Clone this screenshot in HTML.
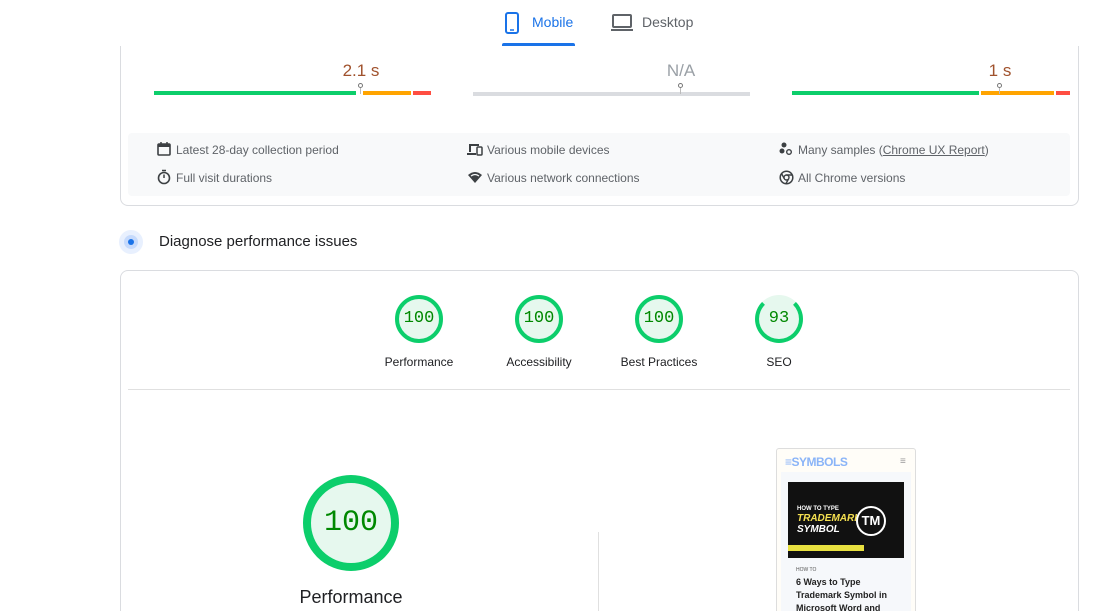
<!DOCTYPE html>
<html><head><style>
*{box-sizing:border-box;margin:0;padding:0}
html,body{width:1097px;height:611px;overflow:hidden}
body{background:#fff;font-family:"Liberation Sans",Arial,sans-serif;position:relative;color:#3c4043}
.abs{position:absolute}
.card{position:absolute;border:1px solid #dadce0;border-radius:8px;background:#fff}
.bar{position:absolute;height:4px}
.val{position:absolute;font-size:17px;color:#a0522d;transform:translateX(-50%)}
.pin{position:absolute;width:5px;height:5px;border:1px solid #777;border-radius:50%;background:#fff}
.pinl{position:absolute;width:1px;height:6px;background:#bbb}
.info{position:absolute;font-size:12px;color:#5f6368}
.ic{position:absolute}
.gauge{position:absolute;text-align:center;font-size:12px;color:#202124}
.gauge .c{width:48px;height:48px;border-radius:50%;border:4px solid #0cce6b;background:#e6f8ee;color:#008800;font-family:"Liberation Mono",monospace;font-size:17px;line-height:40px;margin:0 auto}
</style></head><body>
<div class="card" style="left:120px;top:-20px;width:959px;height:226px"></div>
<div class="abs" style="left:0;top:0;width:1097px;height:46px;background:#fff"></div>
<svg class="abs" style="left:504px;top:12px" width="16" height="22" viewBox="0 0 16 22"><rect x="2" y="1" width="12" height="20" rx="2" fill="none" stroke="#1a73e8" stroke-width="2"/><line x1="6" y1="18" x2="10" y2="18" stroke="#1a73e8" stroke-width="1.5"/></svg>
<div class="abs" style="left:532px;top:14px;font-size:14px;color:#1a73e8">Mobile</div>
<div class="abs" style="left:502px;top:43px;width:73px;height:3px;background:#1a73e8;border-radius:2px 2px 0 0"></div>
<svg class="abs" style="left:611px;top:13px" width="22" height="20" viewBox="0 0 22 20"><rect x="2" y="2" width="18" height="12" rx="1" fill="none" stroke="#5f6368" stroke-width="2"/><rect x="0" y="16" width="22" height="2" fill="#5f6368"/></svg>
<div class="abs" style="left:642px;top:14px;font-size:14px;color:#5f6368">Desktop</div>
<div class="val" style="left:361px;top:61px">2.1 s</div>
<div class="bar" style="left:154px;top:91px;width:202px;background:#0cce6b"></div>
<div class="bar" style="left:363px;top:91px;width:48px;background:#ffa400"></div>
<div class="bar" style="left:413px;top:91px;width:18px;background:#ff4e42"></div>
<div class="pin" style="left:358px;top:83px"></div><div class="pinl" style="left:360px;top:88px"></div>
<div class="val" style="left:681px;top:61px;color:#9aa0a6">N/A</div>
<div class="bar" style="left:473px;top:92px;width:277px;background:#dadce0"></div>
<div class="pin" style="left:678px;top:83px"></div><div class="pinl" style="left:680px;top:88px"></div>
<div class="val" style="left:1000px;top:61px">1 s</div>
<div class="bar" style="left:792px;top:91px;width:187px;background:#0cce6b"></div>
<div class="bar" style="left:981px;top:91px;width:73px;background:#ffa400"></div>
<div class="bar" style="left:1056px;top:91px;width:14px;background:#ff4e42"></div>
<div class="pin" style="left:997px;top:83px"></div><div class="pinl" style="left:999px;top:88px"></div>
<div class="abs" style="left:128px;top:133px;width:942px;height:63px;background:#f8f9fa;border-radius:4px"></div>
<svg class="ic" style="left:157px;top:142px" width="14" height="14" viewBox="0 0 14 14"><rect x="1" y="2" width="12" height="11" rx="1" fill="none" stroke="#3c4043" stroke-width="1.6"/><rect x="1" y="2" width="12" height="3" fill="#3c4043"/><line x1="4" y1="0" x2="4" y2="3" stroke="#3c4043" stroke-width="1.5"/><line x1="10" y1="0" x2="10" y2="3" stroke="#3c4043" stroke-width="1.5"/></svg>
<div class="info" style="left:176px;top:143px">Latest 28-day collection period</div>
<svg class="ic" style="left:157px;top:169px" width="14" height="16" viewBox="0 0 14 16"><circle cx="7" cy="9" r="5.5" fill="none" stroke="#3c4043" stroke-width="1.6"/><line x1="5" y1="1.5" x2="9" y2="1.5" stroke="#3c4043" stroke-width="1.5"/><line x1="7" y1="9" x2="7" y2="5.5" stroke="#3c4043" stroke-width="1.5"/></svg>
<div class="info" style="left:176px;top:171px">Full visit durations</div>
<svg class="ic" style="left:467px;top:143px" width="16" height="13" viewBox="0 0 16 13"><path d="M2 1h10v2H4v6H2z M0 10h9v2H0z" fill="#3c4043"/><rect x="10" y="4" width="5" height="8" rx="1" fill="none" stroke="#3c4043" stroke-width="1.5"/></svg>
<div class="info" style="left:487px;top:143px">Various mobile devices</div>
<svg class="ic" style="left:467px;top:171px" width="16" height="13" viewBox="0 0 16 13"><path d="M1 4 Q8 -2 15 4 L8 12z" fill="#3c4043"/><path d="M4 5 Q8 2 12 5" stroke="#f8f9fa" stroke-width="1.2" fill="none"/></svg>
<div class="info" style="left:487px;top:171px">Various network connections</div>
<svg class="ic" style="left:779px;top:142px" width="14" height="14" viewBox="0 0 14 14"><circle cx="5" cy="3" r="2.5" fill="#3c4043"/><circle cx="3" cy="9" r="2.5" fill="#3c4043"/><circle cx="10" cy="10" r="2.3" fill="none" stroke="#3c4043" stroke-width="1.4"/></svg>
<div class="info" style="left:798px;top:143px">Many samples (<u>Chrome UX Report</u>)</div>
<svg class="ic" style="left:779px;top:170px" width="15" height="15" viewBox="0 0 15 15"><circle cx="7.5" cy="7.5" r="6.3" fill="none" stroke="#3c4043" stroke-width="1.5"/><circle cx="7.5" cy="7.5" r="2.5" fill="none" stroke="#3c4043" stroke-width="1.4"/><path d="M7.5 5H13 M5.3 8.7L2.5 3.5 M9.7 8.7L7 13.5" stroke="#3c4043" stroke-width="1.4"/></svg>
<div class="info" style="left:798px;top:171px">All Chrome versions</div>
<div class="abs" style="left:119px;top:230px;width:24px;height:24px;border-radius:50%;background:#e8f0fe"></div>
<div class="abs" style="left:124px;top:235px;width:14px;height:14px;border-radius:50%;background:#c6dafc"></div>
<div class="abs" style="left:128px;top:239px;width:6px;height:6px;border-radius:50%;background:#1a73e8"></div>
<div class="abs" style="left:159px;top:233px;font-size:15px;color:#202124">Diagnose performance issues</div>
<div class="card" style="left:120px;top:270px;width:959px;height:360px"></div>
<div class="gauge" style="left:379px;top:295px;width:80px"><div class="c">100</div><div style="margin-top:12px">Performance</div></div>
<div class="gauge" style="left:499px;top:295px;width:80px"><div class="c">100</div><div style="margin-top:12px">Accessibility</div></div>
<div class="gauge" style="left:609px;top:295px;width:100px"><div class="c">100</div><div style="margin-top:12px">Best Practices</div></div>
<div class="gauge" style="left:739px;top:295px;width:80px"><div class="c" style="border-top-color:#e6f8ee">93</div><div style="margin-top:12px">SEO</div></div>
<div class="abs" style="left:128px;top:389px;width:942px;height:1px;background:#e0e0e0"></div>
<div class="abs" style="left:303px;top:475px;width:96px;height:96px;border-radius:50%;border:8px solid #0cce6b;background:#e6f8ee;color:#008800;font-family:'Liberation Mono',monospace;font-size:30px;line-height:80px;text-align:center">100</div>
<div class="abs" style="left:270px;top:587px;width:162px;text-align:center;font-size:18px;color:#202124">Performance</div>
<div class="abs" style="left:598px;top:532px;width:1px;height:80px;background:#e0e0e0"></div>
<div class="abs" style="left:776px;top:448px;width:140px;height:170px;border:1px solid #ddd;border-radius:3px;background:#fffdf8"></div>
<div class="abs" style="left:785px;top:455px;font-size:12px;font-weight:bold;color:#8ab4f8;letter-spacing:-0.5px">≡SYMBOLS</div>
<div class="abs" style="left:900px;top:456px;font-size:10px;color:#999">≡</div>
<div class="abs" style="left:781px;top:472px;width:130px;height:140px;background:#f6f8fb"></div>
<div class="abs" style="left:788px;top:482px;width:116px;height:76px;background:#111"></div>
<div class="abs" style="left:797px;top:506px;font-size:6px;color:#fff;font-weight:bold">HOW TO TYPE</div>
<div class="abs" style="left:797px;top:513px;font-size:10px;color:#f5e050;font-weight:bold;font-style:italic">TRADEMARK</div>
<div class="abs" style="left:797px;top:524px;font-size:10px;color:#fff;font-weight:bold;font-style:italic">SYMBOL</div>
<div class="abs" style="left:856px;top:506px;width:30px;height:30px;border-radius:50%;border:2px solid #fff;color:#fff;font-size:13px;font-weight:bold;text-align:center;line-height:26px;background:#111">TM</div>
<div class="abs" style="left:788px;top:545px;width:76px;height:6px;background:#e8e040"></div>
<div class="abs" style="left:796px;top:567px;font-size:5px;color:#555">HOW TO</div>
<div class="abs" style="left:796px;top:576px;width:100px;font-size:9px;font-weight:bold;color:#222;line-height:13px">6 Ways to Type Trademark Symbol in Microsoft Word and</div>
</body></html>
